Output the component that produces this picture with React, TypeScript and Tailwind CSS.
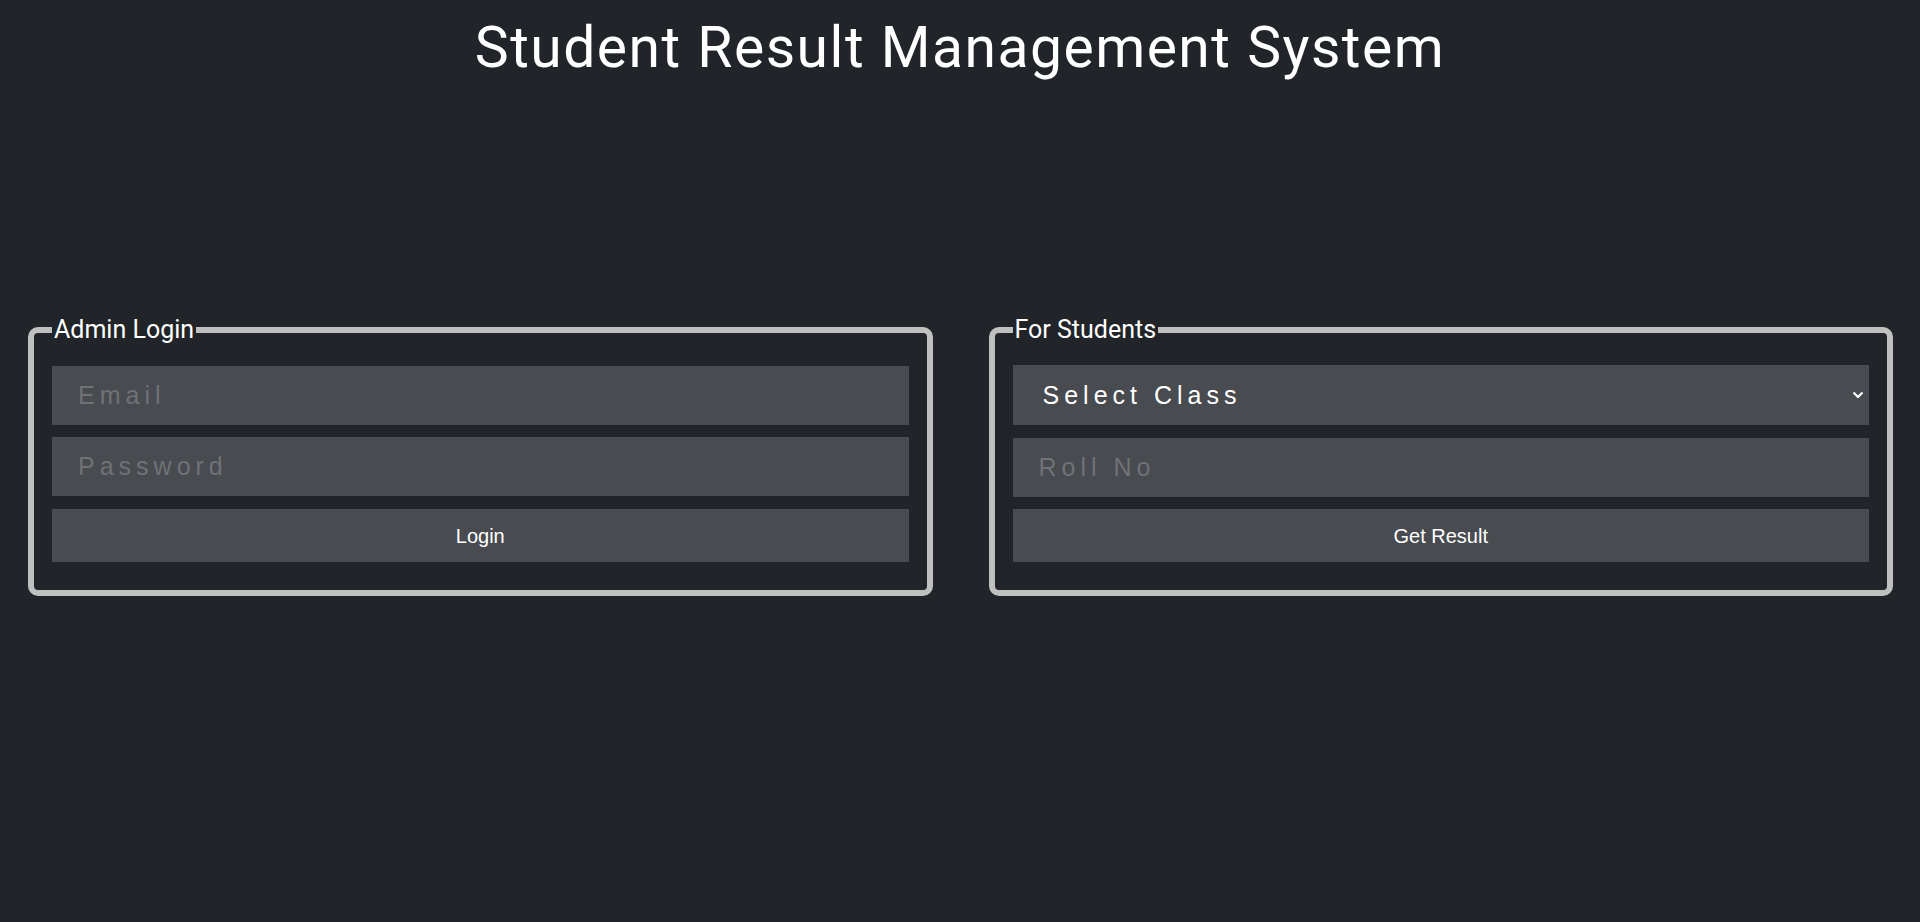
import React, { useState } from 'react';

// Shared look for the dark form controls
const field =
    'block w-full bg-[#484b50] text-white outline-none border-0 rounded-none px-[26px] text-[25px] tracking-[5px] placeholder:text-[#6f7276]';

const Chevron = () => (
    <svg className="pointer-events-none absolute right-[5px] top-1/2 -translate-y-1/2" width="12" height="8" viewBox="0 0 12 8" fill="none">
        <path d="M1.5 1.5 L6 6 L10.5 1.5" stroke="white" strokeWidth="2.2" />
    </svg>
);

const App: React.FC = () => {
    const [email, setEmail] = useState('');
    const [password, setPassword] = useState('');
    const [cls, setCls] = useState('');
    const [roll, setRoll] = useState('');

    return (
        <div className="min-h-[922px] bg-[#212529] text-white" style={{ fontFamily: 'Roboto, "Liberation Sans", sans-serif' }}>
            <h1 className="pt-[14px] text-center text-[57px] leading-[1.2] tracking-[1.5px] font-normal text-white">
                Student Result Management System
            </h1>

            <div className="mt-[234px] flex gap-[56px] pl-[28px] pr-[27px]">
                {/* Admin */}
                <fieldset className="flex-1 min-w-0 border-[6px] border-[#c0c0c0] rounded-[10px] px-[18px] pt-[22px] pb-[28px]">
                    <legend className="px-[2px] text-[25px] leading-[28px] text-white">Admin Login</legend>
                    <input
                        type="email"
                        placeholder="Email"
                        value={email}
                        onChange={(e) => setEmail(e.target.value)}
                        className={`${field} h-[59px]`}
                        style={{ fontFamily: '"Liberation Sans", Arial, sans-serif' }}
                    />
                    <input
                        type="password"
                        placeholder="Password"
                        value={password}
                        onChange={(e) => setPassword(e.target.value)}
                        className={`${field} h-[59px] mt-[12px]`}
                        style={{ fontFamily: '"Liberation Sans", Arial, sans-serif' }}
                    />
                    <button
                        className="block w-full h-[53px] mt-[13px] bg-[#484b50] text-white text-[20px]"
                        style={{ fontFamily: '"Liberation Sans", Arial, sans-serif' }}
                    >
                        Login
                    </button>
                </fieldset>

                {/* Students */}
                <fieldset className="flex-1 min-w-0 border-[6px] border-[#c0c0c0] rounded-[10px] px-[18px] pt-[21px] pb-[28px]">
                    <legend className="px-[2px] text-[25px] leading-[28px] text-white">For Students</legend>
                    <div className="relative">
                        <select
                            value={cls}
                            onChange={(e) => setCls(e.target.value)}
                            className={`${field} h-[60px] pl-[30px] appearance-none`}
                            style={{ fontFamily: '"Liberation Sans", Arial, sans-serif' }}
                        >
                            <option value="">Select Class</option>
                            <option value="1">Class 1</option>
                            <option value="2">Class 2</option>
                        </select>
                        <Chevron />
                    </div>
                    <input
                        type="text"
                        placeholder="Roll No"
                        value={roll}
                        onChange={(e) => setRoll(e.target.value)}
                        className={`${field} h-[59px] mt-[13px]`}
                        style={{ fontFamily: '"Liberation Sans", Arial, sans-serif' }}
                    />
                    <button
                        className="block w-full h-[53px] mt-[12px] bg-[#484b50] text-white text-[20px]"
                        style={{ fontFamily: '"Liberation Sans", Arial, sans-serif' }}
                    >
                        Get Result
                    </button>
                </fieldset>
            </div>
        </div>
    );
};

export default App;
